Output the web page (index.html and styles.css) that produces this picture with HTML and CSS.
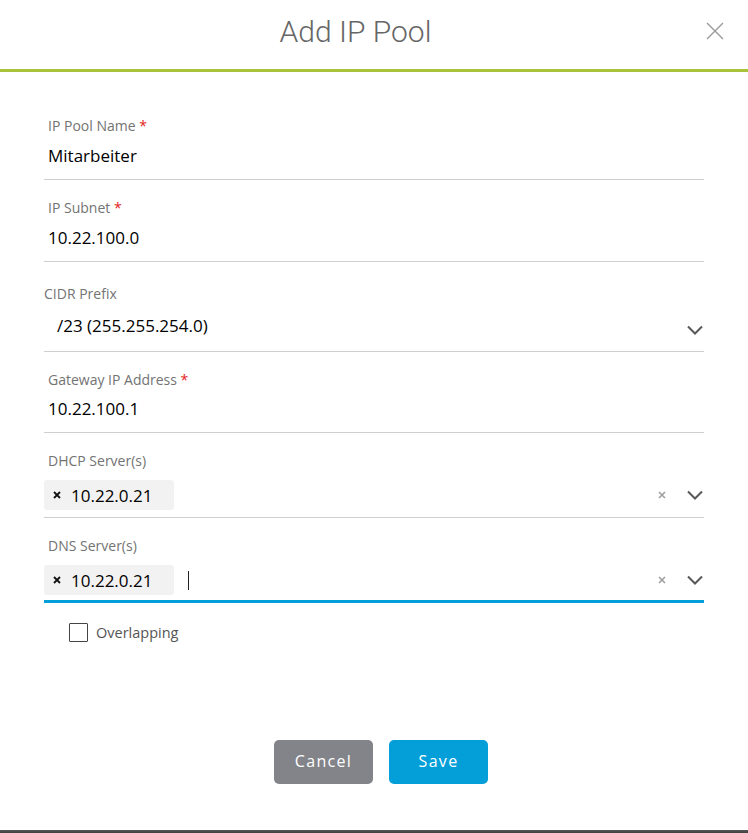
FILE: index.html
```html
<!DOCTYPE html>
<html>
<head>
<meta charset="utf-8">
<title>Add IP Pool</title>
<link rel="stylesheet" href="styles.css">
</head>
<body>
<div class="dialog">
  <header class="header">
    <h1 class="title">Add IP Pool</h1>
    <button class="close" aria-label="Close">
      <svg width="18" height="18" viewBox="0 0 18 18"><path d="M1 1L17 17M17 1L1 17" stroke="#9a9a9a" stroke-width="1.4" fill="none"/></svg>
    </button>
  </header>
  <form class="form">
    <div class="field">
      <div class="label">IP Pool Name <span class="req">*</span></div>
      <div class="value">Mitarbeiter</div>
    </div>
    <div class="field">
      <div class="label">IP Subnet <span class="req">*</span></div>
      <div class="value">10.22.100.0</div>
    </div>
    <div class="field field-select">
      <div class="label label-flush">CIDR Prefix</div>
      <div class="row">
        <div class="value value-select">/23 (255.255.254.0)</div>
        <span class="chev chev-low"><svg width="16" height="10" viewBox="0 0 16 10"><polyline points="1,1.5 8,8.5 15,1.5" fill="none" stroke="#58585b" stroke-width="2"/></svg></span>
      </div>
    </div>
    <div class="field field-tight">
      <div class="label">Gateway IP Address <span class="req">*</span></div>
      <div class="value">10.22.100.1</div>
    </div>
    <div class="field field-multi">
      <div class="label">DHCP Server(s)</div>
      <div class="row">
        <div class="chips">
          <span class="chip"><svg class="chip-x" width="8" height="8" viewBox="0 0 8 8"><path d="M1 1L7 7M7 1L1 7" stroke="#111" stroke-width="1.8"/></svg>10.22.0.21</span>
        </div>
        <span class="clear"><svg width="8" height="8" viewBox="0 0 8 8"><path d="M1 1L7 7M7 1L1 7" stroke="#9e9e9e" stroke-width="1.6"/></svg></span>
        <span class="chev"><svg width="16" height="10" viewBox="0 0 16 10"><polyline points="1,1.5 8,8.5 15,1.5" fill="none" stroke="#58585b" stroke-width="2"/></svg></span>
      </div>
    </div>
    <div class="field field-multi field-active">
      <div class="label">DNS Server(s)</div>
      <div class="row">
        <div class="chips">
          <span class="chip"><svg class="chip-x" width="8" height="8" viewBox="0 0 8 8"><path d="M1 1L7 7M7 1L1 7" stroke="#111" stroke-width="1.8"/></svg>10.22.0.21</span>
          <span class="caret"></span>
        </div>
        <span class="clear"><svg width="8" height="8" viewBox="0 0 8 8"><path d="M1 1L7 7M7 1L1 7" stroke="#9e9e9e" stroke-width="1.6"/></svg></span>
        <span class="chev"><svg width="16" height="10" viewBox="0 0 16 10"><polyline points="1,1.5 8,8.5 15,1.5" fill="none" stroke="#58585b" stroke-width="2"/></svg></span>
      </div>
    </div>
    <label class="check">
      <span class="box"></span>
      <span class="check-text">Overlapping</span>
    </label>
    <div class="actions">
      <button type="button" class="btn btn-cancel">Cancel</button>
      <button type="button" class="btn btn-save">Save</button>
    </div>
  </form>
  <div class="bottom-bar"></div>
</div>
</body>
</html>
```
FILE: styles.css
```css
* { box-sizing: border-box; }
html, body { margin: 0; padding: 0; background: #fff; }
body { font-family: "Open Sans", "Liberation Sans", sans-serif; color: #000; }

.dialog {
  width: 748px;
  height: 833px;
  display: flex;
  flex-direction: column;
}

.header {
  height: 72px;
  border-bottom: 3px solid #a9c23a;
  display: flex;
  align-items: center;
  padding-left: 5px;
}
.title {
  flex: 1;
  margin: 0;
  text-align: center;
  font-family: Roboto, "Open Sans", sans-serif;
  font-weight: 300;
  font-size: 30px;
  color: #666;
  line-height: 36px;
  margin-top: -6px;
}
.close {
  width: 18px;
  height: 18px;
  padding: 0;
  margin: -7px 24px 0 0;
  border: 0;
  background: none;
  display: flex;
}

.form {
  padding: 26px 44px 0;
  display: flex;
  flex-direction: column;
}

.field {
  padding: 19px 0 12px;
  border-bottom: 1px solid #cfcfcf;
}
.label {
  font-size: 14px;
  line-height: 18px;
  color: #737373;
  padding-left: 4px;
}
.label-flush { padding-left: 0; }
.req { color: #e2231a; }
.value {
  margin-top: 10px;
  font-size: 17px;
  line-height: 22px;
  padding-left: 4px;
  color: #000;
}
.field-tight .value { margin-top: 9px; }

.field-select { padding: 23px 0 14px; }
.field-select .row { margin-top: 12px; }
.field-select .value { margin-top: 0; padding-left: 13px; flex: 1; }

.row {
  display: flex;
  align-items: center;
}
.chev {
  width: 16px;
  height: 10px;
  display: flex;
  margin-right: 1px;
}
.chev-low { margin-top: 7px; }
.clear {
  width: 8px;
  height: 8px;
  display: flex;
  margin-right: 21px;
}

.field-multi { padding-bottom: 7px; }
.field-multi .row { margin-top: 10px; }
.chips {
  flex: 1;
  display: flex;
  align-items: center;
}
.chip {
  height: 30px;
  width: 130px;
  background: #f2f2f2;
  border-radius: 3px;
  display: flex;
  align-items: center;
  padding-left: 9px;
  font-size: 17px;
  color: #000;
}
.chip-x { margin-right: 10px; }
.caret {
  width: 1px;
  height: 19px;
  background: #222;
  margin-left: 14px;
}
.field-active {
  padding-bottom: 5px;
  border-bottom: 3px solid #049fd9;
}

.check {
  margin: 20px 0 0 25px;
  display: flex;
  align-items: center;
}
.box {
  width: 19px;
  height: 19px;
  border: 1px solid #444;
  border-radius: 1px;
}
.check-text {
  margin-left: 8px;
  font-size: 14.5px;
  color: #555;
}

.actions {
  margin-top: 98px;
  display: flex;
  justify-content: center;
  gap: 16px;
  padding-left: 14px;
}
.btn {
  width: 99px;
  height: 44px;
  border: 0;
  border-radius: 5px;
  color: #fff;
  font-family: "Open Sans", sans-serif;
  font-size: 16px;
  letter-spacing: 1.3px;
  padding: 0 0 3px;
}
.btn-cancel { background: #838489; }
.btn-save { background: #049fd9; }

.bottom-bar {
  margin-top: auto;
  height: 3px;
  background: linear-gradient(#575757, #3f3f3f);
}
```
